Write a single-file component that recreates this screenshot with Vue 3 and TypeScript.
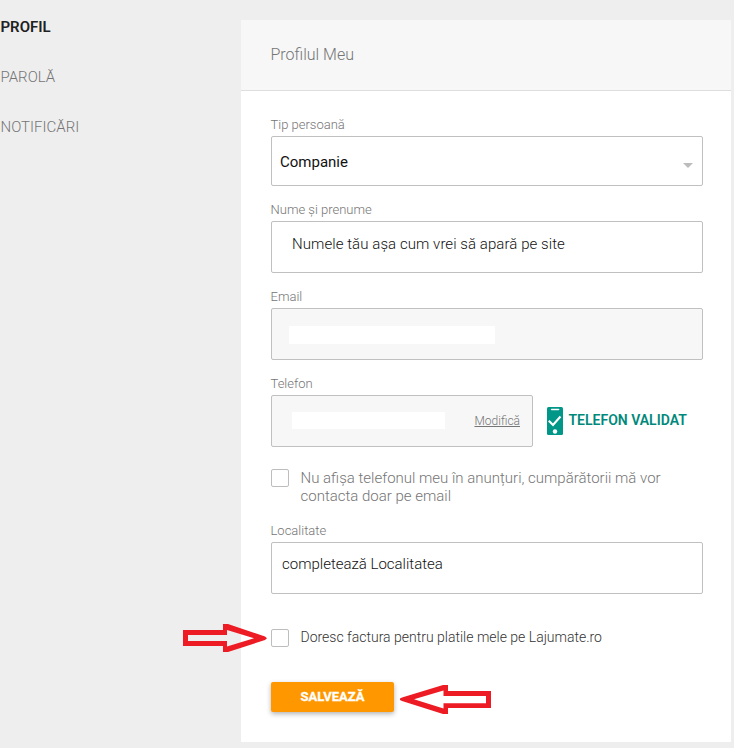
<script setup lang="ts">
import { ref } from 'vue'

const menu = ['PROFIL', 'PAROLĂ', 'NOTIFICĂRI']
const active = ref('PROFIL')
const hidePhone = ref(false)
const wantInvoice = ref(false)
</script>

<template>
  <div class="page">
    <nav class="menu">
      <a
        v-for="item in menu"
        :key="item"
        class="menu-item"
        :class="{ active: item === active }"
        @click="active = item"
      >{{ item }}</a>
    </nav>

    <main class="card">
      <header class="card-header">Profilul Meu</header>
      <form class="form" @submit.prevent>
        <div class="field">
          <label class="label">Tip persoană</label>
          <div class="box select">
            <span class="selected">Companie</span>
            <svg class="caret" width="10" height="5" viewBox="0 0 10 5"><path d="M0 0H10L5 5Z" fill="#bcbcbc" /></svg>
          </div>
        </div>

        <div class="field">
          <label class="label">Nume și prenume</label>
          <div class="box name">Numele tău așa cum vrei să apară pe site</div>
        </div>

        <div class="field">
          <label class="label">Email</label>
          <div class="box disabled email"><i class="mask" /></div>
        </div>

        <div class="field">
          <label class="label">Telefon</label>
          <div class="phone-row">
            <div class="box disabled phone">
              <i class="mask" />
              <a class="edit">Modifică</a>
            </div>
            <svg class="phone-icon" width="16" height="28" viewBox="0 0 16 28">
              <rect width="16" height="28" rx="1.5" fill="#009688" />
              <path d="M4.600 2.500H11.600" stroke="#fff" stroke-width="1.600" stroke-linecap="round" />
              <path d="M1.800 13.800L6 18L13.500 9.500" fill="none" stroke="#fff" stroke-width="2.100" />
              <circle cx="8" cy="24.500" r="2.200" fill="#fff" />
            </svg>
            <span class="valid">TELEFON VALIDAT</span>
          </div>
        </div>

        <div class="check-row hide-phone" @click="hidePhone = !hidePhone">
          <span class="checkbox" :class="{ checked: hidePhone }" />
          <p class="check-text">Nu afișa telefonul meu în anunțuri, cumpărătorii mă vor<br>contacta doar pe email</p>
        </div>

        <div class="field">
          <label class="label">Localitate</label>
          <div class="box city">completează Localitatea</div>
        </div>

        <div class="check-row invoice" @click="wantInvoice = !wantInvoice">
          <span class="checkbox" :class="{ checked: wantInvoice }" />
          <span class="invoice-text">Doresc factura pentru platile mele pe Lajumate.ro</span>
        </div>

        <button class="save" type="submit">SALVEAZĂ</button>
      </form>
    </main>

    <svg class="arrow arrow-right" width="84" height="28" viewBox="0 0 84 28">
      <path d="M0 6H40V0H45L82 12.500L84 14.200L82 16L45 28H40V22H0ZM5 11V17H44V22.500L71 14.300L44 6V11Z" />
    </svg>
    <svg class="arrow arrow-left" width="91" height="29" viewBox="0 0 91 29">
      <path d="M0 13.500L2 12.500L43 0H48V6H91V23H48V29H43L2 16L0 15ZM14 14.300L43.500 23.500V18.300H86V11H43.500V5.500Z" />
    </svg>
  </div>
</template>

<style>
body {
  background: #eee;
}
</style>

<style scoped>
.page {
  position: relative;
  box-sizing: border-box;
  width: 734px;
  height: 748px;
  padding: 20px 3px 6px 0;
  display: flex;
  overflow: hidden;
  background: #eee;
  font-family: Roboto, "Liberation Sans", sans-serif;
  font-weight: 300;
  color: #757575;
}
.menu {
  box-sizing: border-box;
  width: 241px;
  flex: none;
  padding-left: 0.5px;
}
.menu-item {
  display: block;
  height: 50px;
  line-height: 14px;
  font-size: 15px;
  cursor: pointer;
}
.menu-item.active {
  font-weight: 600;
  color: #212121;
}
.card {
  flex: 1;
  background: #fff;
}
.card-header {
  height: 70px;
  border-bottom: 1px solid #dedede;
  background: #f7f7f7;
  padding-left: 29.5px;
  font-size: 16px;
  line-height: 70px;
}
.form {
  padding: 25px 28px 0 30px;
}
.field {
  margin-bottom: 15px;
}
.label {
  display: block;
  height: 20px;
  margin-left: -0.5px;
  font-size: 13px;
  line-height: 18px;
}
.box {
  box-sizing: border-box;
  height: 52px;
  border: 1px solid #c0c0c0;
  border-radius: 2px;
  font-size: 15px;
  line-height: 18px;
  color: #111;
  display: flex;
}
.select {
  height: 50px;
  align-items: center;
  justify-content: space-between;
  padding: 0 9px 0 8px;
}
.selected {
  padding-top: 2px;
  font-weight: 400;
}
.caret {
  margin-top: 9px;
}
.name {
  padding: 13px 20px;
  letter-spacing: 0.07px;
}
.city {
  padding: 12px 10px;
}
.disabled {
  background: #f7f7f7;
}
.mask {
  background: #fff;
}
.email .mask {
  width: 206px;
  height: 18px;
  margin: 17px 0 0 17px;
}
.phone-row {
  display: flex;
  align-items: center;
}
.phone {
  width: 262px;
  justify-content: space-between;
  padding: 16px 12px 0 20px;
}
.phone .mask {
  width: 153px;
  height: 17px;
}
.edit {
  font-size: 12px;
  color: #757575;
  text-decoration: underline;
}
.phone-icon {
  margin-left: 14px;
}
.valid {
  margin: -2px 0 0 5.5px;
  font-size: 14px;
  font-weight: 600;
  color: #00897b;
}
.check-row {
  display: flex;
  gap: 11.5px;
}
.checkbox {
  box-sizing: border-box;
  flex: none;
  width: 18px;
  height: 18px;
  border: 1px solid #bdbdbd;
  border-radius: 2px;
  background: #fff;
}
.checkbox.checked {
  background: #009688;
}
.hide-phone {
  margin: 22px 0 17px;
}
.check-text {
  margin: 0;
  font-size: 15px;
  line-height: 18px;
  white-space: nowrap;
}
.invoice {
  margin: 35px 0;
}
.invoice-text {
  font-size: 14px;
  line-height: 16px;
  color: #333;
}
.save {
  display: block;
  width: 123px;
  height: 30px;
  padding: 0;
  border: 0;
  border-radius: 2px;
  background: #ff9800;
  box-shadow: 0 2px 5px rgba(0, 0, 0, 0.3);
  font: 700 13px/30px Roboto, sans-serif;
  -webkit-text-stroke: 0.3px #fff;
  color: #fff;
}
.arrow {
  position: absolute;
  pointer-events: none;
}
.arrow path {
  fill: #ed1c24;
  fill-rule: evenodd;
}
.arrow-right {
  left: 183px;
  top: 624px;
}
.arrow-left {
  left: 400px;
  top: 685px;
}
</style>
